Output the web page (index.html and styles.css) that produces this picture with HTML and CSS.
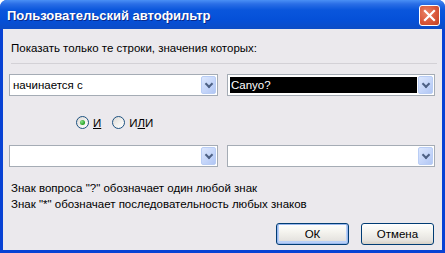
FILE: index.html
```html
<!DOCTYPE html>
<html lang="ru">
<head>
  <meta charset="UTF-8" />
  <title>Пользовательский автофильтр</title>
  <link rel="stylesheet" href="styles.css">
</head>
<body>

  <div class="janela">
    <div class="titulo">
      <span class="titulo-texto">Пользовательский автофильтр</span>
      <button class="fechar" aria-label="Закрыть">
        <svg width="13" height="13" viewBox="0 0 13 13">
          <path d="M2 2 L11 11 M11 2 L2 11" stroke="#fff" stroke-width="2.2" stroke-linecap="square" />
        </svg>
      </button>
    </div>

    <div class="conteudo">
      <p class="legenda">Показать только те строки, значения которых:</p>
      <div class="separador"></div>

      <div class="linha-combo primeira">
        <div class="combo">
          <span class="combo-texto">начинается с</span>
          <span class="seta"></span>
        </div>
        <div class="combo">
          <span class="combo-texto selecionado">Canyo?</span>
          <span class="seta"></span>
        </div>
      </div>

      <div class="radios">
        <label class="radio"><span class="circulo marcado"></span><span><u>И</u></span></label>
        <label class="radio"><span class="circulo"></span><span>И<u>Л</u>И</span></label>
      </div>

      <div class="linha-combo">
        <div class="combo">
          <span class="combo-texto"></span>
          <span class="seta"></span>
        </div>
        <div class="combo">
          <span class="combo-texto"></span>
          <span class="seta"></span>
        </div>
      </div>

      <div class="dicas">
        <p>Знак вопроса "?" обозначает один любой знак</p>
        <p>Знак "*" обозначает последовательность любых знаков</p>
      </div>

      <div class="botoes">
        <button class="botao padrao">ОК</button>
        <button class="botao">Отмена</button>
      </div>
    </div>
  </div>

</body>
</html>
```

FILE: styles.css
```css
body {
  margin: 0;
  background-color: #ffffff;
  font-family: "Liberation Sans", Arial, sans-serif;
  font-size: 11.5px;
}

.janela {
  width: 445px;
  height: 253px;
  display: flex;
  flex-direction: column;
  background-color: #0842d4;
  border-radius: 7px 7px 0 0;
  overflow: hidden;
}

.titulo {
  height: 29px;
  flex-shrink: 0;
  display: flex;
  align-items: center;
  justify-content: space-between;
  padding: 0 5px 0 7px;
  background: linear-gradient(#4a90f5 0, #2a6ee6 4px, #0a56dc 10px, #0550d8 20px, #0c4cc6 29px);
  color: white;
}

.titulo-texto {
  font-family: "Liberation Sans", Arial, sans-serif;
  font-weight: bold;
  font-size: 13px;
  text-shadow: 1px 1px 0 #0a2a8a;
  margin-top: 1px;
}

.fechar {
  width: 21px;
  height: 21px;
  padding: 0;
  border: 1px solid #ffffff;
  border-radius: 3px;
  background: radial-gradient(circle at 35% 35%, #ea8466 0, #d9573a 55%, #c24121 100%);
  display: flex;
  align-items: center;
  justify-content: center;
  margin-top: 1px;
}

.conteudo {
  flex: 1;
  margin: 0 3px 3px 3px;
  background-color: #ebe9ed;
  padding: 0 8px 0 6px;
  display: flex;
  flex-direction: column;
}

.legenda {
  margin: 13px 0 0 2px;
  line-height: 13px;
  color: #000;
}

.separador {
  height: 1px;
  background-color: #d3d1d6;
  margin: 8px -3px 0 2px;
}

.linha-combo {
  display: grid;
  grid-template-columns: 209px 208px;
  column-gap: 9px;
  margin-top: 16px;
}

.linha-combo.primeira {
  margin-top: 10px;
}

.combo {
  height: 22px;
  box-sizing: border-box;
  border: 1px solid #a5acb5;
  background-color: #ffffff;
  display: flex;
  align-items: center;
  padding: 2px 1px 2px 2px;
  gap: 1px;
}

.combo-texto {
  flex: 1;
  height: 100%;
  display: flex;
  align-items: center;
  padding-left: 1px;
  color: #000;
}

.combo-texto.selecionado {
  background-color: #000000;
  color: #ffffff;
}

.seta {
  width: 15px;
  height: 18px;
  box-sizing: border-box;
  border: 1px solid #b9cdf5;
  border-radius: 2px;
  background: linear-gradient(135deg, #dce7fd 0, #c3d4f9 60%, #b1c6f3 100%);
  position: relative;
  margin-top: -1px;
  margin-bottom: -1px;
}

.seta::after {
  content: "";
  position: absolute;
  left: 4px;
  top: 4px;
  width: 4px;
  height: 4px;
  border-right: 2px solid #4d6185;
  border-bottom: 2px solid #4d6185;
  transform: rotate(45deg);
}

.radios {
  display: flex;
  gap: 11px;
  margin: 20px 0 0 67px;
  height: 13px;
}

.radio {
  display: flex;
  align-items: center;
  gap: 4px;
  color: #000;
}

.circulo {
  width: 13px;
  height: 13px;
  box-sizing: border-box;
  border-radius: 50%;
  border: 1px solid #1c5180;
  background: linear-gradient(135deg, #dcd9d5 0, #f4f3f0 60%, #ffffff 100%);
  display: flex;
  align-items: center;
  justify-content: center;
}

.circulo.marcado::after {
  content: "";
  width: 5px;
  height: 5px;
  border-radius: 50%;
  background: radial-gradient(circle at 35% 35%, #8be08b 0, #21a121 70%);
}

.dicas {
  margin: 13px 0 0 2px;
  color: #000;
}

.dicas p {
  margin: 0;
  line-height: 16px;
}

.botoes {
  display: flex;
  justify-content: flex-end;
  gap: 12px;
  margin-top: 11px;
}

.botao {
  width: 73px;
  height: 22px;
  box-sizing: border-box;
  border: 1px solid #003c74;
  border-radius: 3px;
  background: linear-gradient(#ffffff 0, #f4f3ee 40%, #e6e4e0 80%, #d6d0c5 100%);
  font-family: "Liberation Sans", Arial, sans-serif;
  font-size: 11.5px;
  color: #000;
  padding: 0;
}

.botao.padrao {
  box-shadow: inset 0 0 0 1px #9ab8ed, inset 0 -1px 0 2px #b8d0f8;
}
```
